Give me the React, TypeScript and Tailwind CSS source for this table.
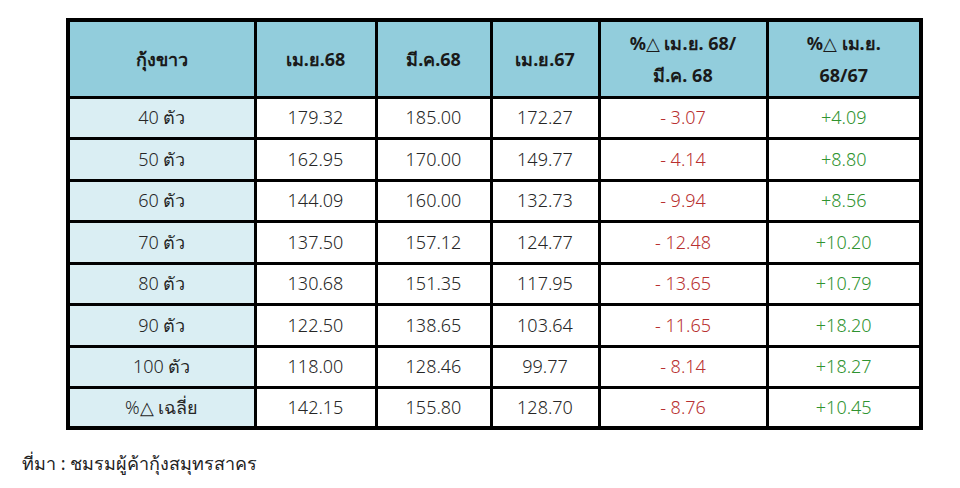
const rows = [
  ["40 ตัว", "179.32", "185.00", "172.27", "- 3.07", "+4.09"],
  ["50 ตัว", "162.95", "170.00", "149.77", "- 4.14", "+8.80"],
  ["60 ตัว", "144.09", "160.00", "132.73", "- 9.94", "+8.56"],
  ["70 ตัว", "137.50", "157.12", "124.77", "- 12.48", "+10.20"],
  ["80 ตัว", "130.68", "151.35", "117.95", "- 13.65", "+10.79"],
  ["90 ตัว", "122.50", "138.65", "103.64", "- 11.65", "+18.20"],
  ["100 ตัว", "118.00", "128.46", "99.77", "- 8.14", "+18.27"],
  ["%△ เฉลี่ย", "142.15", "155.80", "128.70", "- 8.76", "+10.45"],
]

const th = "border-[3px] border-black bg-[#92cddc] font-bold text-[18px] leading-[32px] text-[#1a1a1a] text-center"
const td = "border-[3px] border-black text-center text-[18px] font-light"

export default function App() {
  return (
    <div className="w-[960px] h-[488px] bg-white pt-[18px] pl-[66px]" style={{ fontFamily: "Tahoma, 'Noto Sans', 'DejaVu Sans', sans-serif" }}>
      <table className="border-collapse border-[4px] border-black w-[853px] table-fixed">
        <colgroup>
          <col className="w-[187px]" />
          <col className="w-[121px]" />
          <col className="w-[115px]" />
          <col className="w-[108px]" />
          <col className="w-[168px]" />
          <col className="w-[154px]" />
        </colgroup>
        <thead>
          <tr className="h-[77px]">
            <th className={th}>กุ้งขาว</th>
            <th className={th}>เม.ย.68</th>
            <th className={th}>มี.ค.68</th>
            <th className={th}>เม.ย.67</th>
            <th className={th}>%△ เม.ย. 68/<br />มี.ค. 68</th>
            <th className={th}>%△ เม.ย.<br />68/67</th>
          </tr>
        </thead>
        <tbody>
          {rows.map((r, i) => (
            <tr key={i} className={i === rows.length - 1 ? "h-[40px]" : "h-[41.5px]"}>
              <td className={td + " bg-[#daeef3] text-[#262626]"}>{r[0]}</td>
              <td className={td + " text-[#262626]"}>{r[1]}</td>
              <td className={td + " text-[#262626]"}>{r[2]}</td>
              <td className={td + " text-[#262626]"}>{r[3]}</td>
              <td className={td + " text-[#b83030]"}>{r[4]}</td>
              <td className={td + " text-[#2f932f]"}>{r[5]}</td>
            </tr>
          ))}
        </tbody>
      </table>
      <p className="-ml-[44px] mt-[20px] text-[18px] text-[#222]">ที่มา : ชมรมผู้ค้ากุ้งสมุทรสาคร</p>
    </div>
  )
}
